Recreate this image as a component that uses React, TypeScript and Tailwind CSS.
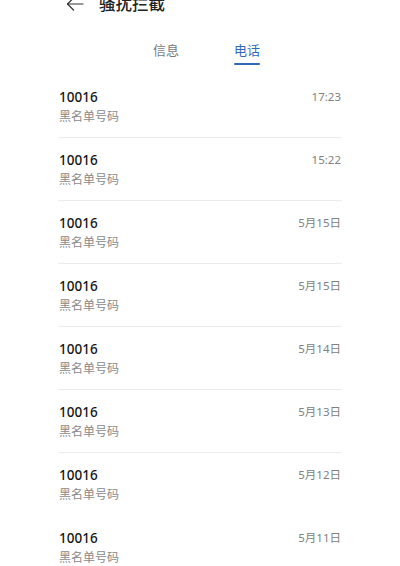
import React, { useState } from 'react';

interface BlockedCall {
  id: string;
  number: string;
  label: string;
  time: string;
  divider: boolean;
}

const CALLS: BlockedCall[] = [
  { id: '1', number: '10016', label: '黑名单号码', time: '17:23', divider: true },
  { id: '2', number: '10016', label: '黑名单号码', time: '15:22', divider: true },
  { id: '3', number: '10016', label: '黑名单号码', time: '5月15日', divider: true },
  { id: '4', number: '10016', label: '黑名单号码', time: '5月15日', divider: true },
  { id: '5', number: '10016', label: '黑名单号码', time: '5月14日', divider: true },
  { id: '6', number: '10016', label: '黑名单号码', time: '5月13日', divider: true },
  { id: '7', number: '10016', label: '黑名单号码', time: '5月12日', divider: false },
  { id: '8', number: '10016', label: '黑名单号码', time: '5月11日', divider: false },
];

const FONT = "font-['Noto_Sans','Noto_Sans_CJK_SC',sans-serif]";

export default function App() {
  const [tab, setTab] = useState<'sms' | 'call'>('call');

  return (
    <div className={`w-[400px] h-[566px] overflow-hidden bg-white ${FONT}`}>
      {/* Top bar, scrolled partly out of view */}
      <div className="h-[24px] -mt-[8px] flex items-center pl-[66px]">
        <svg width="18" height="14" viewBox="0 0 18 14" fill="none" stroke="#333" strokeWidth="1.2" strokeLinecap="round" strokeLinejoin="round">
          <path d="M17 7H1.5" />
          <path d="M7.5 1L1.5 7L7.5 13" />
        </svg>
        <span className="ml-[15px] text-[16.5px] leading-[24px] font-medium text-[#222]">骚扰拦截</span>
      </div>

      {/* Tabs */}
      <div className="flex justify-center gap-[55px] pl-[13px] pt-[26px] mb-[10px]">
        <button onClick={() => setTab('sms')} className="flex flex-col items-center">
          <span className={`text-[13px] leading-[16px] ${tab === 'sms' ? 'text-[#2f69b8]' : 'text-[#7a7a7a]'}`}>信息</span>
          <span className={`mt-[5px] h-[2px] w-[26px] rounded-full ${tab === 'sms' ? 'bg-[#2f69b8]' : 'bg-transparent'}`} />
        </button>
        <button onClick={() => setTab('call')} className="flex flex-col items-center">
          <span className={`text-[13px] leading-[16px] ${tab === 'call' ? 'text-[#2f69b8]' : 'text-[#7a7a7a]'}`}>电话</span>
          <span className={`mt-[5px] h-[2px] w-[26px] rounded-full ${tab === 'call' ? 'bg-[#2f69b8]' : 'bg-transparent'}`} />
        </button>
      </div>

      {/* Call list */}
      <div className="mx-[58px]">
        {CALLS.map((c) => (
          <div
            key={c.id}
            className={`flex justify-between pt-[13px] pb-[11px] border-b ${c.divider ? 'border-[#ececec]' : 'border-transparent'}`}
          >
            <div className="flex flex-col pl-[1px]">
              <span className="text-[13.5px] leading-[18px] font-medium text-[#141414]">{c.number}</span>
              <span className="mt-[2px] text-[12px] leading-[18px] text-[#8a8a8a]">{c.label}</span>
            </div>
            <span className="text-[11.5px] leading-[18px] text-[#808080] pr-[1px]">{c.time}</span>
          </div>
        ))}
      </div>
    </div>
  );
}
